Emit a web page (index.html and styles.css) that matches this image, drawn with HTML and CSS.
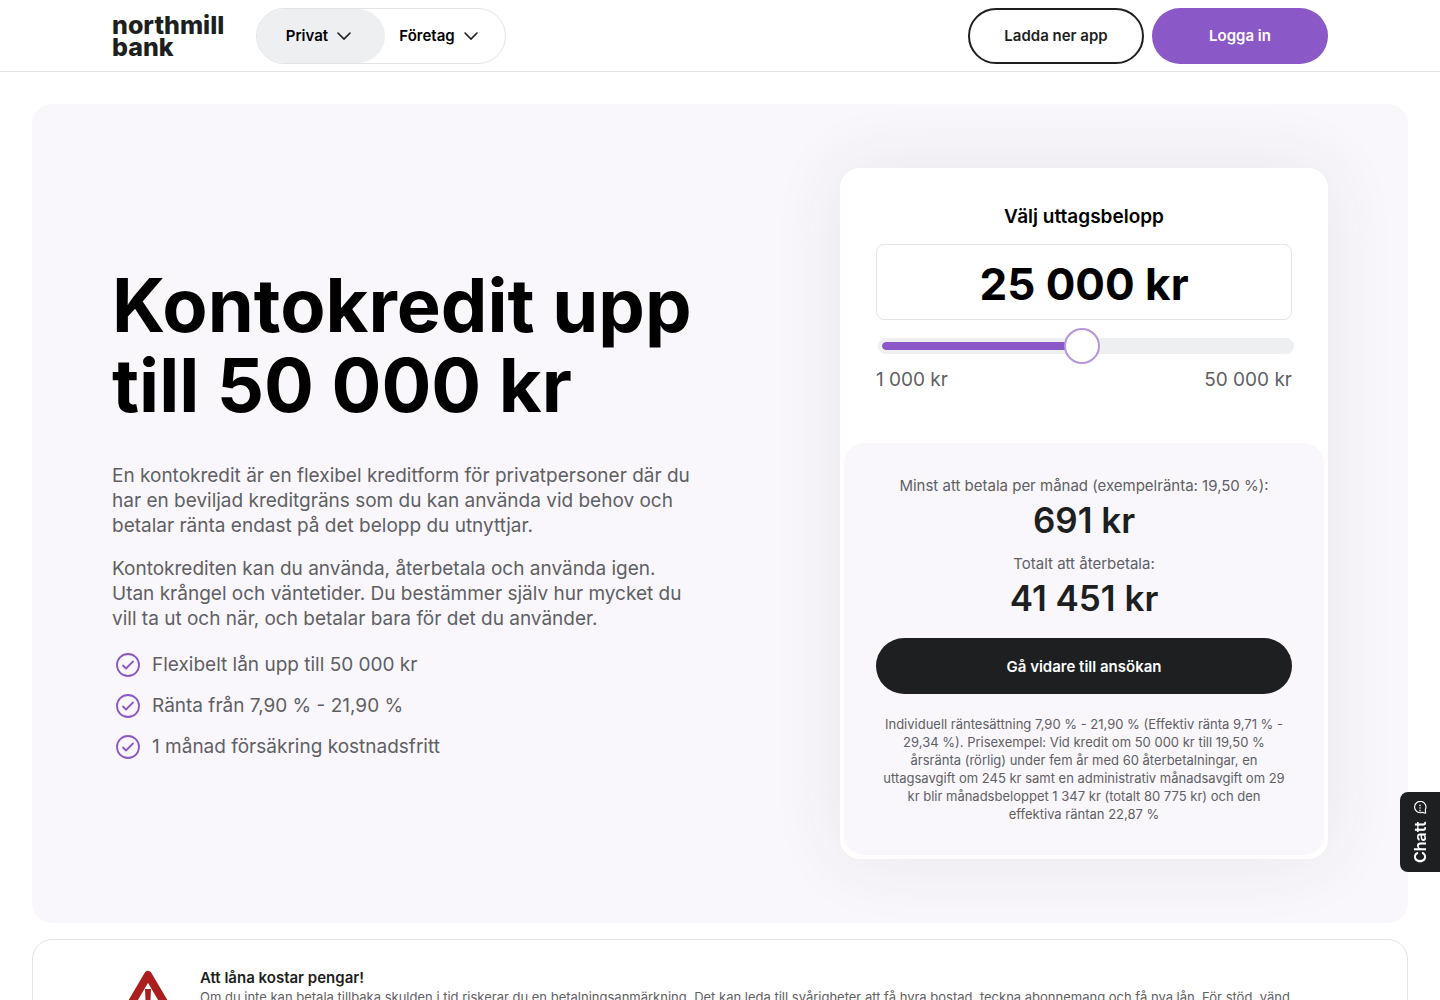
FILE: index.html
```html
<!DOCTYPE html>
<html lang="sv">
<head>
<meta charset="utf-8">
<meta name="viewport" content="width=device-width, initial-scale=1">
<title>Kontokredit – Northmill Bank</title>
<link rel="stylesheet" href="styles.css">
</head>
<body>
<header class="header">
  <a class="logo" href="#">northmill<br>bank</a>
  <nav class="segments">
    <button class="segment segment-active" type="button">Privat
      <svg class="chevron" viewBox="0 0 16 16" aria-hidden="true"><path d="M2 5l6 6 6-6"/></svg>
    </button>
    <button class="segment" type="button">Företag
      <svg class="chevron" viewBox="0 0 16 16" aria-hidden="true"><path d="M2 5l6 6 6-6"/></svg>
    </button>
  </nav>
  <div class="actions">
    <a class="pill pill-outline" href="#">Ladda ner app</a>
    <a class="pill pill-purple" href="#">Logga in</a>
  </div>
</header>

<main class="main">
  <section class="hero">
    <div class="intro">
      <h1 class="title">Kontokredit upp<br>till 50 000 kr</h1>
      <p class="lead">En kontokredit är en flexibel kreditform för privatpersoner där du<br>har en beviljad kreditgräns som du kan använda vid behov och<br>betalar ränta endast på det belopp du utnyttjar.</p>
      <p class="lead">Kontokrediten kan du använda, återbetala och använda igen.<br>Utan krångel och väntetider. Du bestämmer själv hur mycket du<br>vill ta ut och när, och betalar bara för det du använder.</p>
      <ul class="benefits">
        <li class="benefit"><svg class="check" viewBox="0 0 24 24" aria-hidden="true"><circle cx="12" cy="12" r="11"/><path d="M7 12.500l3 3 7-7"/></svg>Flexibelt lån upp till 50 000 kr</li>
        <li class="benefit"><svg class="check" viewBox="0 0 24 24" aria-hidden="true"><circle cx="12" cy="12" r="11"/><path d="M7 12.500l3 3 7-7"/></svg>Ränta från 7,90 % - 21,90 %</li>
        <li class="benefit"><svg class="check" viewBox="0 0 24 24" aria-hidden="true"><circle cx="12" cy="12" r="11"/><path d="M7 12.500l3 3 7-7"/></svg>1 månad försäkring kostnadsfritt</li>
      </ul>
    </div>

    <form class="card">
      <div class="picker">
        <label class="picker-label" for="amount">Välj uttagsbelopp</label>
        <input class="amount" id="amount" type="text" value="25 000 kr">
        <input class="slider" type="range" min="1000" max="50000" step="1000" value="25000" aria-label="Uttagsbelopp">
        <div class="limits"><span>1 000 kr</span><span>50 000 kr</span></div>
      </div>
      <div class="summary">
        <p class="caption">Minst att betala per månad (exempelränta: 19,50 %):</p>
        <p class="sum">691 kr</p>
        <p class="caption caption-next">Totalt att återbetala:</p>
        <p class="sum">41 451 kr</p>
        <button class="pill apply" type="button">Gå vidare till ansökan</button>
        <p class="terms">Individuell räntesättning 7,90 % - 21,90 % (Effektiv ränta 9,71 % -<br>29,34 %). Prisexempel: Vid kredit om 50 000 kr till 19,50 %<br>årsränta (rörlig) under fem år med 60 återbetalningar, en<br>uttagsavgift om 245 kr samt en administrativ månadsavgift om 29<br>kr blir månadsbeloppet 1 347 kr (totalt 80 775 kr) och den<br>effektiva räntan 22,87 %</p>
      </div>
    </form>
  </section>

  <section class="notice">
    <svg class="warning" viewBox="0 0 72 64" aria-hidden="true"><path class="warning-edge" d="M36 7L66 58H6z"/><path class="warning-mark" d="M33 21h6l-1 22h-4z"/><circle class="warning-mark" cx="36" cy="48" r="3"/></svg>
    <div>
      <h2 class="notice-title">Att låna kostar pengar!</h2>
      <p class="notice-text">Om du inte kan betala tillbaka skulden i tid riskerar du en betalningsanmärkning. Det kan leda till svårigheter att få hyra bostad, teckna abonnemang och få nya lån. För stöd, vänd</p>
    </div>
  </section>
</main>

<button class="chat" type="button">Chatt
  <svg class="chat-icon" viewBox="0 0 16 16" aria-hidden="true"><path d="M2 14.500l1-4A6.500 6.500 0 1 1 6 14z"/><path class="chat-dots" d="M5 8h.1M8 8h.1M11 8h.1"/></svg>
</button>
</body>
</html>
```
FILE: styles.css
```css
* { box-sizing: border-box; }

body {
  margin: 0;
  background: #fff;
  color: #1d1f21;
  font-family: Inter, "Liberation Sans", sans-serif;
  font-size: 16px;
}

h1, h2, p, ul { margin: 0; padding: 0; }
button, input { font-family: inherit; color: inherit; }
a { color: inherit; text-decoration: none; }

.header {
  display: flex;
  align-items: center;
  height: 72px;
  padding: 0 112px;
  border-bottom: 1px solid #e3e4e5;
}

.logo {
  width: 144px;
  font-size: 25px;
  font-weight: 800;
  line-height: 22px;
}

.segments {
  display: flex;
  width: 250px;
  height: 56px;
  border: 1px solid #e3e4e5;
  border-radius: 28px;
}

.segment {
  display: flex;
  flex: 0 0 108px;
  align-items: center;
  justify-content: center;
  gap: 8px;
  padding: 0;
  border: 0;
  border-radius: 28px;
  background: none;
  color: #000;
  font-size: 15px;
  font-weight: 600;
}

.segment-active { flex-basis: 128px; padding-right: 4px; background: #eeeff1; }

.chevron {
  width: 16px;
  height: 16px;
  fill: none;
  stroke: #1d1f21;
  stroke-width: 1.6;
  stroke-linecap: round;
}

.actions { display: flex; gap: 8px; margin-left: auto; }

.pill {
  display: flex;
  align-items: center;
  justify-content: center;
  width: 176px;
  height: 56px;
  border-radius: 28px;
  font-size: 15px;
  font-weight: 600;
}

.pill-outline { border: 2px solid #1d1f21; }
.pill-purple { background: #8b58c8; color: #fff; }

.main {
  display: flex;
  flex-direction: column;
  gap: 16px;
  padding: 32px;
}

.hero {
  display: flex;
  align-items: center;
  justify-content: space-between;
  gap: 64px;
  padding: 64px 80px;
  border-radius: 20px;
  background: #f9f7fc;
}

.title {
  margin-bottom: 38px;
  color: #000;
  font-size: 74px;
  font-weight: 700;
  line-height: 80px;
  white-space: nowrap;
}

.lead {
  margin-bottom: 18px;
  color: #5f6063;
  font-size: 19px;
  line-height: 25px;
  white-space: nowrap;
}

.benefits {
  display: flex;
  flex-direction: column;
  gap: 17px;
  padding: 4px;
  list-style: none;
}

.benefit {
  display: flex;
  align-items: center;
  gap: 12px;
  color: #5f6063;
  font-size: 19px;
  line-height: 24px;
}

.check {
  width: 24px;
  height: 24px;
  fill: none;
  stroke: #8b58c8;
  stroke-width: 1.8;
  stroke-linecap: round;
  stroke-linejoin: round;
}

.card {
  flex: 0 0 488px;
  padding: 4px;
  border-radius: 20px;
  background: #fff;
  box-shadow: 0 0 72px rgba(70, 30, 60, 0.09);
}

.picker {
  display: flex;
  flex-direction: column;
  padding: 32px 32px 50px;
}

.picker-label {
  margin-bottom: 14px;
  color: #000;
  font-size: 19px;
  font-weight: 600;
  line-height: 26px;
  text-align: center;
}

.amount {
  width: 100%;
  height: 76px;
  padding: 4px 0 0;
  border: 1px solid #e3e4e5;
  border-radius: 8px;
  background: #fff;
  color: #000;
  font-size: 44px;
  font-weight: 700;
  text-align: center;
}

.slider {
  width: 100%;
  height: 36px;
  margin: 8px 2px 3px;
  appearance: none;
  background: none;
}

.slider::-webkit-slider-runnable-track {
  height: 16px;
  border: 4px solid #eeeff1;
  border-radius: 8px;
  background: linear-gradient(to right, #8b58c8 49%, #eeeff1 49%) padding-box;
}

.slider::-webkit-slider-thumb {
  width: 36px;
  height: 36px;
  margin-top: -14px;
  appearance: none;
  border: 2px solid #b595dc;
  border-radius: 50%;
  background: #fff;
}

.limits {
  display: flex;
  justify-content: space-between;
  color: #5f6063;
  font-size: 19px;
  line-height: 26px;
}

.summary {
  padding: 32px;
  border-radius: 20px;
  background: #f9f7fc;
  text-align: center;
}

.caption { color: #5f6063; font-size: 15px; line-height: 22px; white-space: nowrap; }
.caption-next { margin-top: 10px; }
.sum { font-size: 35px; font-weight: 600; line-height: 46px; }

.apply {
  width: 100%;
  margin: 17px 0 21px;
  border: 0;
  background: #1d1f21;
  color: #fff;
}

.terms { color: #5f6063; font-size: 13px; line-height: 18px; white-space: nowrap; }

.notice {
  display: flex;
  align-items: flex-start;
  gap: 16px;
  padding: 28px 79px;
  border: 1px solid #e3e4e5;
  border-radius: 20px;
}

.warning { flex: none; width: 72px; height: 64px; }
.warning-edge { fill: none; stroke: #ab1e1e; stroke-width: 8; stroke-linejoin: round; }
.warning-mark { fill: #ab1e1e; }

.notice-title { font-size: 15px; font-weight: 600; line-height: 20px; }
.notice-text { color: #5f6063; font-size: 13px; line-height: 18px; }

.chat {
  position: fixed;
  right: 0;
  bottom: 128px;
  display: flex;
  align-items: center;
  justify-content: center;
  gap: 6px;
  width: 40px;
  height: 80px;
  padding: 0;
  border: 0;
  border-radius: 0 8px 8px 0;
  background: #1d1f21;
  color: #fff;
  font-size: 16px;
  font-weight: 600;
  writing-mode: vertical-rl;
  transform: rotate(180deg);
}

.chat-icon {
  width: 14px;
  height: 14px;
  fill: none;
  stroke: #fff;
  stroke-width: 1.3;
  stroke-linecap: round;
  stroke-linejoin: round;
  transform: rotate(90deg);
}

.chat-dots { stroke-width: 1.8; }
```
